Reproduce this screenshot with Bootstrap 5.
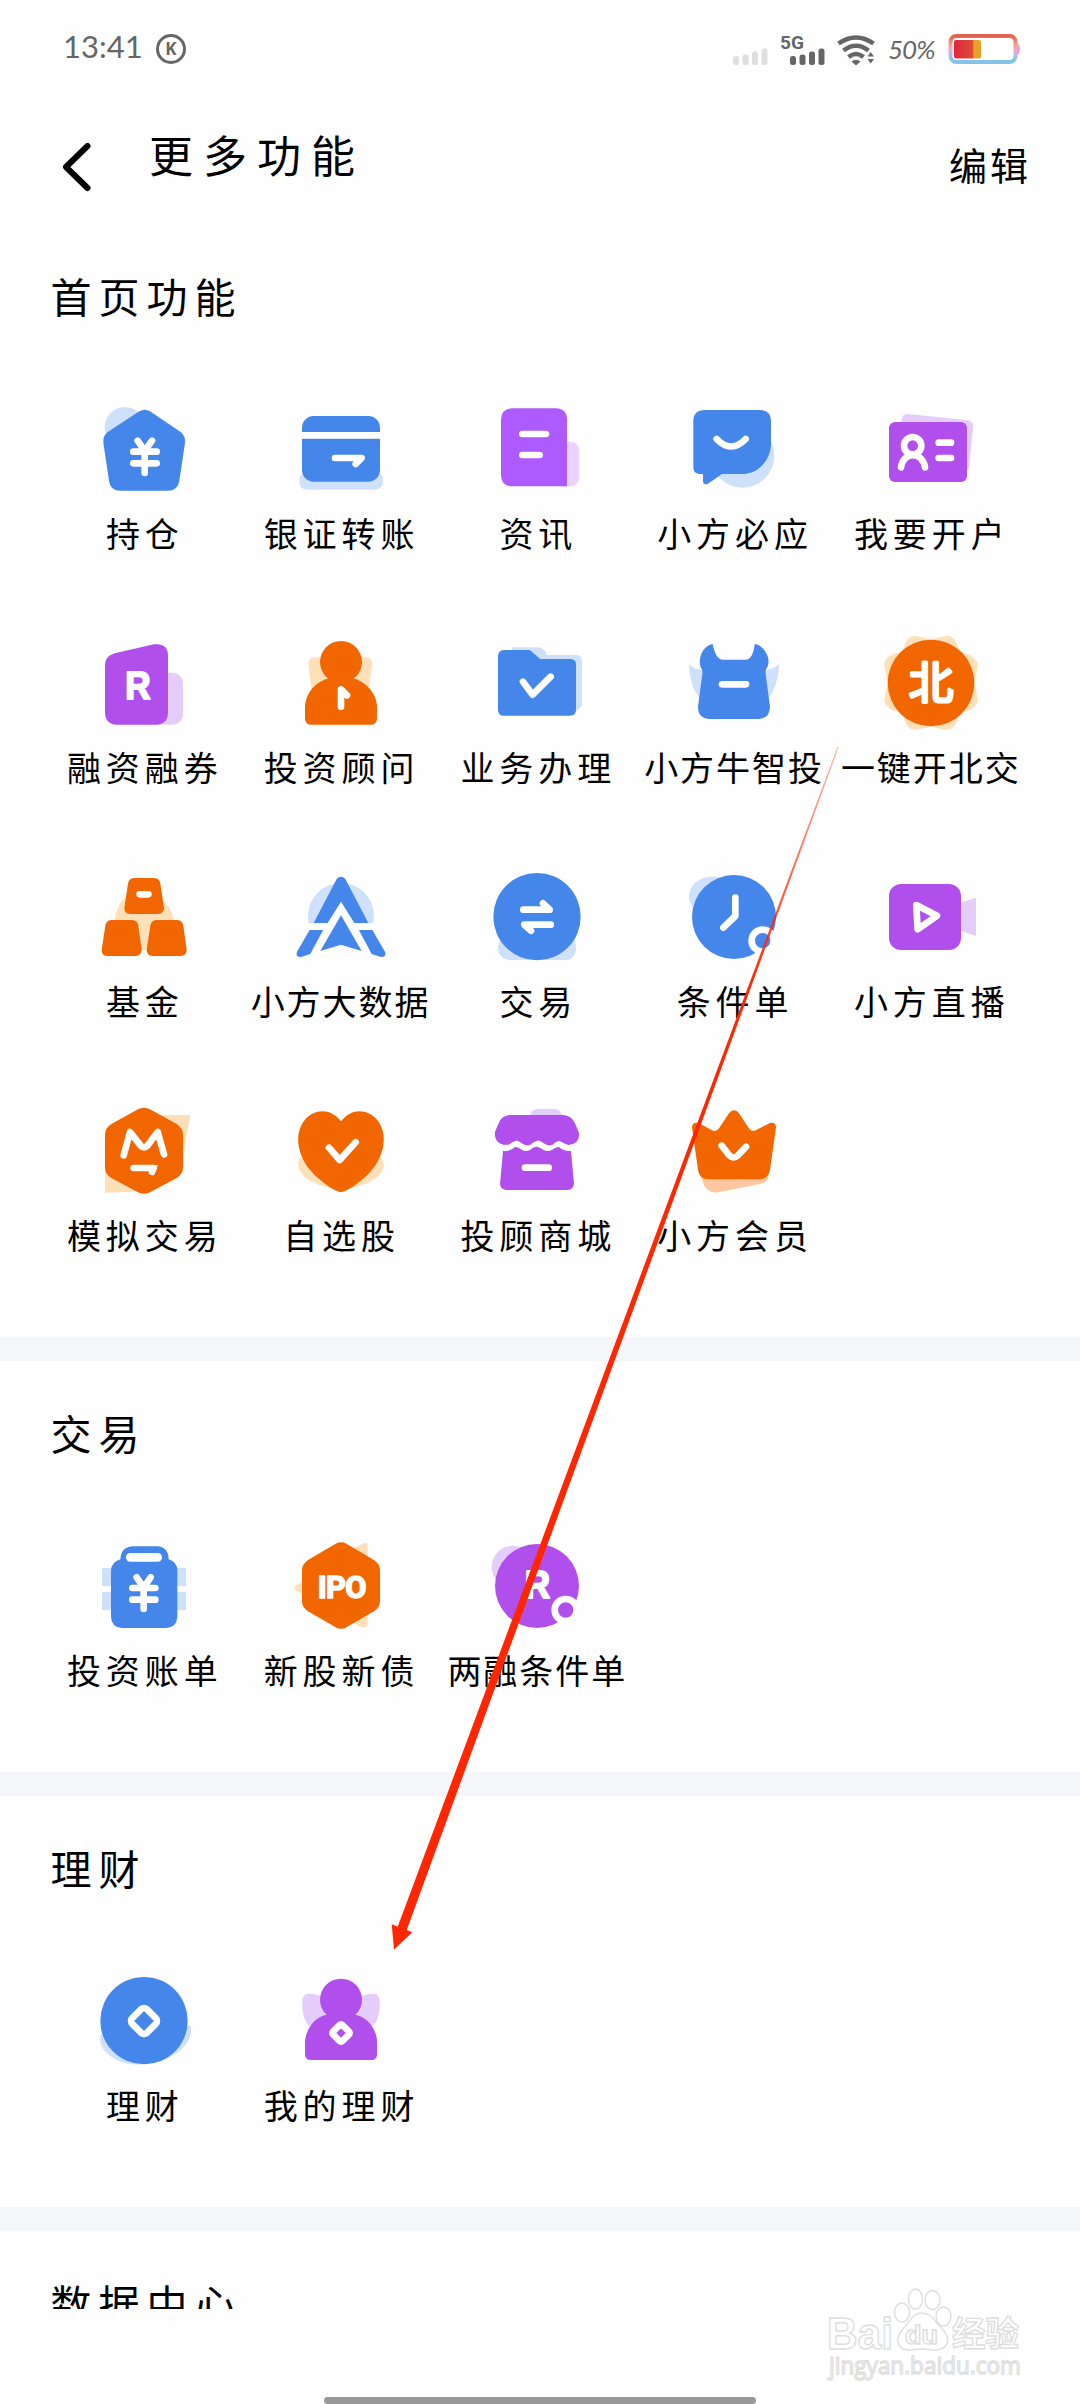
<!DOCTYPE html>
<html lang="zh-CN">
<head>
<meta charset="utf-8">
<meta name="viewport" content="width=device-width, initial-scale=1">
<title>更多功能</title>
<link href="https://cdn.jsdelivr.net/npm/bootstrap@5.3.0/dist/css/bootstrap.min.css" rel="stylesheet">
<style>
body{font-family:"Liberation Sans","Noto Sans CJK SC",sans-serif;background:#fefefe;color:#000;font-weight:400}
.phone{width:1080px;height:2404px;background:#fefefe}
.statusbar{height:96px;padding:1px 60px 0 63px;color:#666}
.clock{font:400 31px/1 Lato,sans-serif;width:78px;margin:-4px 14px 0 0;white-space:nowrap}
.pct{font:italic 400 26px/1 Lato,sans-serif;width:50px;margin:0 10px 0 8px;white-space:nowrap;letter-spacing:-1px}
.topbar{height:128px;padding:13px 49px 0 58px}
.title-text{font-size:44px;letter-spacing:10px;line-height:60px;margin:0 0 18px 54px;font-weight:400}
.edit-text{font-size:38px;letter-spacing:3px;line-height:50px;text-decoration:none}
.viewport-area{height:2085px}
.panel{padding:50px 50px 1px 45.5px;border-bottom:24px solid #f5f6fa}
.panel h2{font-size:41px;letter-spacing:7px;line-height:50px;margin:0 0 76px 5px;font-weight:400}
.tile{flex:0 0 196.75px;height:234px;font-size:34px;color:#000;text-decoration:none}
.tile svg{width:100px;height:100px;overflow:visible;flex:none}
.cap-text{line-height:40px;margin-top:15px;letter-spacing:5px;margin-right:-2px;white-space:nowrap}
.cap-long{letter-spacing:2px;margin-right:0}
.home-pill{width:432px;height:7px;border-radius:4px;background:#999}
.overlay{left:0;top:0;pointer-events:none}
.b{fill:#4586eb}.bl{fill:#cfe0fb}.p{fill:#b14fec}.pl{fill:#e4cdfb}.o{fill:#f26600}.ol{fill:#fde0b8}
.w{fill:none;stroke:#fff;stroke-width:20;stroke-linecap:round;stroke-linejoin:round}
.wf{fill:#fff}
.glyph{fill:#fff;stroke:#fff;stroke-linejoin:round;text-anchor:middle;font-family:"Liberation Sans","Noto Sans CJK SC",sans-serif;font-weight:700}
</style>
</head>
<body>
<div class="phone position-relative overflow-hidden d-flex flex-column mx-auto">

  <div class="statusbar d-flex align-items-center flex-shrink-0">
    <span class="clock">13:41</span>
    <svg width="32" height="32" viewBox="0 0 32 32"><circle cx="16" cy="16" r="13.500" fill="none" stroke="#666" stroke-width="3"/><text x="16" y="22" text-anchor="middle" font-family="Open Sans" font-weight="700" font-size="17" fill="#666">K</text></svg>
    <svg class="ms-auto" width="150" height="36" viewBox="0 0 150 36">
      <g fill="#dedede"><rect x="3" y="25" width="6" height="9" rx="2.500"/><rect x="12.500" y="23.500" width="6" height="10.500" rx="2.500"/><rect x="22" y="20.500" width="6" height="13.500" rx="2.500"/><rect x="31.500" y="17.500" width="6" height="16.500" rx="2.500"/></g>
      <text x="50" y="17.500" font-family="Roboto" font-weight="700" font-size="19" fill="#666" textLength="24" lengthAdjust="spacingAndGlyphs">5G</text>
      <g fill="#666"><rect x="60" y="25" width="6" height="9" rx="2.500"/><rect x="69.500" y="23.500" width="6" height="10.500" rx="2.500"/><rect x="79" y="20.500" width="6" height="13.500" rx="2.500"/><rect x="88.500" y="17.500" width="6" height="16.500" rx="2.500"/></g>
      <g fill="none" stroke="#666" stroke-width="4.500"><path d="M108.500 12.500Q126 0.500 143.500 12.500"/><path d="M113.500 19.500Q126 10 138.500 19.500"/><path d="M118.500 26Q126 20 133.500 26"/></g>
      <path d="M121.500 30.500Q126 27 130.500 30.500L126 34.500ZM137.500 25.500L140.700 21L144 25.500ZM137.500 28L144 28L140.700 32.500Z" fill="#666"/>
    </svg>
    <span class="pct">50%</span>
    <svg class="flex-shrink-0" width="72" height="32" viewBox="0 0 72 32">
      <defs>
        <linearGradient id="rim" x1="0" y1="0" x2="0" y2="1"><stop offset="0" stop-color="#e2604f"/><stop offset=".3" stop-color="#f09a86"/><stop offset=".55" stop-color="#f0a8d4"/><stop offset=".85" stop-color="#8cc4ea"/><stop offset="1" stop-color="#84c4ea"/></linearGradient>
        <linearGradient id="charge"><stop offset="0" stop-color="#de2840"/><stop offset=".68" stop-color="#dd4a33"/><stop offset=".74" stop-color="#e8a128"/><stop offset="1" stop-color="#e6a32c"/></linearGradient>
      </defs>
      <rect x="2.500" y="3" width="65" height="26" rx="6" fill="#fff" stroke="url(#rim)" stroke-width="4"/>
      <path d="M69 10Q72 11 72 16T69 22Z" fill="#efa4c4"/><rect x="6" y="7" width="27" height="18.500" rx="2" fill="url(#charge)"/>
    </svg>
  </div>

  <header class="topbar d-flex align-items-center flex-shrink-0">
    <svg width="37" height="52" viewBox="0 0 37 52"><path d="M29.500 5L8 26L29.500 47" fill="none" stroke="#000" stroke-width="6" stroke-linecap="round" stroke-linejoin="round"/></svg>
    <h1 class="title-text">更多功能</h1>
    <a class="edit-text text-black ms-auto" href="#">编辑</a>
  </header>

  <main class="viewport-area overflow-hidden flex-shrink-0">
    <section class="panel">
      <h2>首页功能</h2>
      <div class="d-flex flex-wrap">
        <a class="tile d-flex flex-column align-items-center" href="#"><svg viewBox="102 60 300 300"><circle class="bl" cx="195" cy="142" r="61"/><path class="b" d="M238 94Q254 84 270 94L362 156Q377 168 375 188L358 302Q354 332 323 332H182Q150 332 147 302L130 188Q128 168 143 156Z"/><path class="w" d="M233 182L254 213L276 182M254 213V279M220 215H290M220 250H290"/></svg><span class="cap-text">持仓</span></a>
        <a class="tile d-flex flex-column align-items-center" href="#"><svg viewBox="693 60 300 300"><path class="bl" d="M718 302Q718 276 745 276H942Q969 276 969 302T942 329H745Q718 329 718 302Z"/><rect class="b" x="726" y="108" width="234" height="197" rx="35"/><path d="M726 166H960" stroke="#fff" stroke-width="20"/><path class="w" d="M825 234H905L887 252"/><path class="wf" d="M877 238H912L890 260Z"/></svg><span class="cap-text">银证转账</span></a>
        <a class="tile d-flex flex-column align-items-center" href="#"><svg viewBox="1284 60 300 300"><rect x="1480" y="185" width="80" height="134" rx="25" fill="#ead3ff"/><path d="M1361 85H1489Q1524 85 1524 120V319H1361Q1326 319 1326 284V120Q1326 85 1361 85Z" fill="#ad5aff"/><path class="w" d="M1390 162H1461M1390 225H1442"/></svg><span class="cap-text">资讯</span></a>
        <a class="tile d-flex flex-column align-items-center" href="#"><svg viewBox="372 60 300 300"><circle class="bl" cx="547" cy="227" r="96"/><path class="b" d="M435 90H599Q633 90 633 124V190C633 240 596 282 545 282H486L444 311Q429 317 429 302V282H417Q400 280 400 262V124Q400 90 435 90Z"/><path class="w" d="M470 177Q513 222 557 177"/></svg><span class="cap-text">小方必应</span></a>
        <a class="tile d-flex flex-column align-items-center" href="#"><svg viewBox="963 60 300 300"><rect class="pl" x="1018" y="111" width="216" height="156" rx="18" transform="rotate(6 1126 189)"/><rect class="p" x="987" y="126" width="234" height="180" rx="18"/><circle class="w" cx="1058" cy="197" r="26"/><path class="w" d="M1023 262C1030 213 1087 213 1095 262M1136 188H1173M1136 234H1173"/></svg><span class="cap-text">我要开户</span></a>

        <a class="tile d-flex flex-column align-items-center" href="#"><svg viewBox="102 762 300 300"><rect class="pl" x="260" y="878" width="109" height="156" rx="32"/><path class="p" d="M164 820L282 793Q324 788 324 828V1000Q322 1034 288 1034H170Q136 1032 135 998V852Q136 828 164 820Z"/><text class="glyph" x="234" y="958" font-size="114" stroke-width="6" textLength="76" lengthAdjust="spacingAndGlyphs">R</text></svg><span class="cap-text">融资融券</span></a>
        <a class="tile d-flex flex-column align-items-center" href="#"><svg viewBox="693 762 300 300"><path class="ol" d="M764 832H917Q939 834 936 856L926 930H755L745 856Q743 835 764 832Z"/><circle class="o" cx="843" cy="846" r="63"/><path class="o" d="M806 895H880C928 910 951 950 951 982V1016Q950 1034 932 1034H754Q736 1034 735 1016V982C736 948 756 910 806 895Z"/><path class="w" d="M843 980V928L861 946"/></svg><span class="cap-text">投资顾问</span></a>
        <a class="tile d-flex flex-column align-items-center" href="#"><svg viewBox="1284 762 300 300"><path class="bl" d="M1358 802H1438Q1453 802 1465 825H1553Q1569 827 1569 843V972Q1567 988 1549 992L1358 820Z"/><path class="b" d="M1335 810H1412L1444 837H1535Q1551 838 1551 853V990Q1551 1007 1533 1007H1335Q1317 1007 1317 989V828Q1318 810 1335 810Z"/><path class="w" d="M1392 905L1421 944L1475 890"/></svg><span class="cap-text">业务办理</span></a>
        <a class="tile d-flex flex-column align-items-center" href="#"><svg viewBox="372 762 300 300"><path class="bl" d="M387 852Q397 866 440 874V955H420Q390 922 387 852ZM657 852Q647 866 604 874V955H624Q654 922 657 852Z"/><path class="b" d="M458 792Q467 839 489 839H556Q579 839 584 792C608 795 636 831 622 862Q615 868 617 883L630 980Q629 1016 595 1017H449Q414 1015 414 980L427 883Q429 868 422 862C412 831 432 795 458 792Z"/><path class="w" d="M486 913H558"/></svg><span class="cap-text cap-long">小方牛智投</span></a>
        <a class="tile d-flex flex-column align-items-center" href="#"><svg viewBox="963 762 300 300"><path class="ol" d="M1065 767L1113 778L1162 767Q1184 768 1194 800L1204 818Q1241 820 1254 853L1244 908L1254 963Q1243 993 1204 998L1194 1016Q1184 1050 1155 1050L1113 1040L1065 1050Q1040 1048 1032 1016L1022 998Q983 993 972 963L983 908L972 853Q980 820 1022 818L1032 800Q1042 767 1065 767Z"/><circle class="o" cx="1113" cy="909" r="130"/><text class="glyph" x="1113" y="958" font-size="134" stroke-width="9" style="font-weight:400">北</text></svg><span class="cap-text cap-long">一键开北交</span></a>

        <a class="tile d-flex flex-column align-items-center" href="#"><svg viewBox="102 84 300 300"><path class="ol" d="M192 175Q162 208 164 260H240V330H270V260H342Q344 214 312 185Z"/><path class="o" d="M222 114H282Q299 115 301 131L312 203Q312 221 294 222H210Q192 220 193 203L204 131Q206 115 222 114Z"/><path class="o" d="M153 240H216Q233 242 235 257L245 329Q244 347 227 348H141Q124 346 125 329L136 257Q138 242 153 240ZM289 240H352Q368 242 370 257L380 329Q380 347 362 348H278Q260 346 260 329L271 257Q273 242 289 240Z"/><path class="w" d="M239 163H265"/></svg><span class="cap-text">基金</span></a>
        <a class="tile d-flex flex-column align-items-center" href="#"><svg viewBox="693 84 300 300"><circle class="bl" cx="843" cy="228" r="99"/><path d="M843 170L942 358H744Z" fill="#fefefe"/><path d="M745 260H941" stroke="#fff" stroke-width="20"/><path class="b" d="M830 117Q843 103 856 117L925 249H883L843 185L803 249H761ZM749 270H789L751 342L723 351Q705 351 711 335ZM897 270H937L975 335Q981 351 963 351L935 342ZM843 226L905 333L843 314L781 333Z"/></svg><span class="cap-text cap-long">小方大数据</span></a>
        <a class="tile d-flex flex-column align-items-center" href="#"><svg viewBox="1284 84 300 300"><path class="bl" d="M1330 280H1535Q1551 292 1551 330Q1547 360 1517 360H1352Q1317 356 1317 320Z"/><circle class="b" cx="1434" cy="230" r="131"/><path class="w" d="M1393 209H1472L1452 190M1475 254H1396L1416 272"/><path class="wf" d="M1445 184L1480 214H1455ZM1422 278L1388 249H1415Z"/></svg><span class="cap-text">交易</span></a>
        <a class="tile d-flex flex-column align-items-center" href="#"><svg viewBox="372 84 300 300"><path class="bl" d="M480 113C430 101 387 128 387 172Q388 195 410 213Z"/><circle class="b" cx="522" cy="231" r="126"/><path class="w" d="M526 173V228L490 263"/><circle cx="608" cy="302" r="33" fill="#4586eb" stroke="#fff" stroke-width="20"/><path d="M589 344Q618 344 638 310L648 285L670 320L610 375Z" fill="#fefefe"/></svg><span class="cap-text">条件单</span></a>
        <a class="tile d-flex flex-column align-items-center" href="#"><svg viewBox="963 84 300 300"><path class="pl" d="M1195 190L1248 173V288L1195 270Z"/><rect class="p" x="987" y="132" width="216" height="198" rx="36"/><path class="w" d="M1069 195L1131 227L1073 268Z"/></svg><span class="cap-text">小方直播</span></a>

        <a class="tile d-flex flex-column align-items-center" href="#"><svg viewBox="102 786 300 300"><path class="ol" d="M300 825H391L373 930L220 1055L135 1058V970Z"/><path class="o" d="M234 808Q252 798 270 808L350 852Q369 864 369 885V982Q369 1003 350 1014L270 1057Q252 1066 234 1057L154 1014Q135 1003 135 982V885Q135 864 154 852Z"/><path class="w" d="M191 946L210 876L242 917Q252 927 262 917L293 876L312 943M221 984H281L276 996"/><path class="wf" d="M260 976H294L280 1004Z"/></svg><span class="cap-text">模拟交易</span></a>
        <a class="tile d-flex flex-column align-items-center" href="#"><svg viewBox="693 786 300 300"><path class="ol" d="M720 953Q704 982 733 1010Q770 1040 843 1050Q916 1040 953 1010Q982 982 966 953Z"/><path class="o" d="M843 844C876 801 924 808 950 838C990 885 968 955 933 993C910 1020 870 1048 853 1054Q843 1059 833 1054C816 1048 776 1020 753 993C718 955 696 885 736 838C762 808 810 801 843 844Z"/><path class="w" d="M807 923L839 960L887 907"/></svg><span class="cap-text">自选股</span></a>
        <a class="tile d-flex flex-column align-items-center" href="#"><svg viewBox="1284 786 300 300"><path class="pl" d="M1413 828Q1415 807 1438 807H1490Q1504 810 1510 828Z"/><path class="p" d="M1352 825H1513Q1538 826 1549 852L1560 880Q1562 913 1528 915Q1515 910 1500 902Q1490 905 1480 914Q1467 920 1454 910Q1443 900 1434 902Q1424 905 1414 914Q1400 920 1388 910Q1377 900 1370 902Q1360 905 1349 914C1320 918 1305 900 1308 875L1321 845Q1330 827 1352 825Z"/><path class="p" d="M1332 933Q1356 934 1368 921Q1378 920 1388 929Q1400 936 1413 930Q1424 919 1435 920Q1445 923 1455 931Q1467 936 1480 929Q1490 920 1500 921Q1512 934 1536 933L1545 1032Q1543 1049 1526 1050H1341Q1324 1048 1323 1032Z"/><path class="w" d="M1398 983H1469"/></svg><span class="cap-text">投顾商城</span></a>
        <a class="tile d-flex flex-column align-items-center" href="#"><svg viewBox="372 786 300 300"><path d="M425 1010H627Q620 1028 600 1032L475 1057Q433 1062 425 1010Z" fill="#ffc7a0"/><path class="o" d="M506 821Q522 801 538 821L568 867Q578 877 590 869L630 849Q648 846 648 862L630 990Q626 1016 601 1018H442Q418 1016 414 990L396 862Q397 845 416 849L456 871Q467 876 476 866Z"/><path class="w" d="M485 917L508 946Q520 959 534 946L558 920"/></svg><span class="cap-text">小方会员</span></a>
      </div>
    </section>

    <section class="panel">
      <h2>交易</h2>
      <div class="d-flex flex-wrap">
        <a class="tile d-flex flex-column align-items-center" href="#"><svg viewBox="0 0 300 300"><path class="bl" d="M24 93H276V147H24ZM24 165H276V219H24Z"/><path class="b" d="M114 28H190Q223 30 224 67Q250 75 250 101V239Q248 272 216 273H84Q52 271 51 239V101Q52 75 79 67Q81 31 114 28Z"/><rect class="wf" x="96" y="48" width="108" height="26" rx="13"/><path class="w" d="M128 121L149 152L170 121M149 152V216M115 153H184M115 188H184"/></svg><span class="cap-text">投资账单</span></a>
        <a class="tile d-flex flex-column align-items-center" href="#"><svg viewBox="0 0 300 300"><path class="ol" d="M190 33L220 18Q230 14 230 27V262Q225 277 212 270L190 260ZM38 133L13 146Q7 152 13 158L38 173Z"/><path class="o" d="M134 20Q150 12 166 20L249 69Q267 82 267 99V193Q267 211 249 223L166 271Q150 280 134 271L51 223Q33 211 33 193V99Q33 82 51 69Z"/><text x="153" y="184" font-size="92" stroke-width="5" class="glyph" style="font-family:Roboto" textLength="146">IPO</text></svg><span class="cap-text">新股新债</span></a>
        <a class="tile d-flex flex-column align-items-center" href="#"><svg viewBox="0 0 300 300"><circle class="pl" cx="78" cy="90" r="64"/><circle class="p" cx="150" cy="147" r="126"/><text class="glyph" x="151" y="182" font-size="114" stroke-width="6" textLength="76" lengthAdjust="spacingAndGlyphs">R</text><circle cx="236" cy="219" r="33" fill="#b14fec" stroke="#fff" stroke-width="20"/><path d="M216 260Q248 260 266 227L276 202L298 237L238 292Z" fill="#fefefe"/></svg><span class="cap-text cap-long">两融条件单</span></a>
      </div>
    </section>

    <section class="panel">
      <h2>理财</h2>
      <div class="d-flex flex-wrap">
        <a class="tile d-flex flex-column align-items-center" href="#"><svg viewBox="162 456 300 300"><path class="bl" d="M183 642Q170 680 215 711Q255 740 312 732Q380 728 425 687Q460 655 452 617Z"/><circle class="b" cx="312" cy="602" r="131"/><rect class="w" x="281" y="572" width="62" height="62" rx="12" transform="rotate(45 312 603)"/></svg><span class="cap-text">理财</span></a>
        <a class="tile d-flex flex-column align-items-center" href="#"><svg viewBox="753 456 300 300"><path class="pl" d="M805 521Q845 520 860 545L850 617H805Q784 590 787 540Q789 522 805 521ZM1001 521Q961 520 946 545L956 617H1001Q1022 590 1019 540Q1017 522 1001 521Z"/><circle class="p" cx="903" cy="539" r="63"/><path class="p" d="M858 584H948C989 594 1011 635 1011 665V704Q1010 720 994 720H812Q796 719 795 704V665C797 634 817 594 858 584Z"/><rect class="w" x="883" y="619" width="40" height="40" rx="6" transform="rotate(45 903 639)"/></svg><span class="cap-text">我的理财</span></a>
      </div>
    </section>

    <section class="panel"><h2>数据中心</h2></section>
  </main>

  <div class="home-pill mt-auto mx-auto flex-shrink-0"></div>

  <svg class="overlay position-absolute" width="1080" height="2404" viewBox="0 0 1080 2404">
    <defs><linearGradient id="fade" gradientUnits="userSpaceOnUse" x1="838" y1="747" x2="750" y2="990"><stop offset="0" stop-color="#ff2600" stop-opacity=".35"/><stop offset="1" stop-color="#ff2600"/></linearGradient></defs>
    <path d="M837.500 747L397.700 1926.700L391.700 1924.300L394 1949.500L412.300 1932.300L406.700 1930L838.700 747Z" fill="url(#fade)"/>
    <g fill="#fff" stroke="#dedede" stroke-width="1.400" font-family="Liberation Sans,Noto Sans CJK SC,sans-serif" font-weight="700">
      <text x="827" y="2349" font-size="44" textLength="66" lengthAdjust="spacingAndGlyphs">Bai</text>
      <path d="M922 2313C932 2313 935 2322 944 2331C952 2341 946 2351 933 2350Q922 2348 911 2350C898 2351 894 2340 902 2330C910 2322 912 2313 922 2313Z"/>
      <ellipse cx="902" cy="2312.500" rx="7.500" ry="9.500"/><ellipse cx="915.500" cy="2299" rx="7" ry="10"/><ellipse cx="932.500" cy="2300" rx="7.500" ry="9.500"/><ellipse cx="943.500" cy="2316.500" rx="7.500" ry="9.500"/>
      <text x="905" y="2343.500" font-size="25" textLength="33" lengthAdjust="spacingAndGlyphs">du</text>
      <text x="952" y="2346" font-size="34" textLength="67" lengthAdjust="spacingAndGlyphs">经验</text>
      <text x="829" y="2374" font-size="24" font-weight="400" font-family="Open Sans,sans-serif" textLength="192" lengthAdjust="spacingAndGlyphs">jingyan.baidu.com</text>
    </g>
  </svg>
</div>
<script src="https://cdn.jsdelivr.net/npm/bootstrap@5.3.0/dist/js/bootstrap.bundle.min.js"></script>
</body>
</html>
